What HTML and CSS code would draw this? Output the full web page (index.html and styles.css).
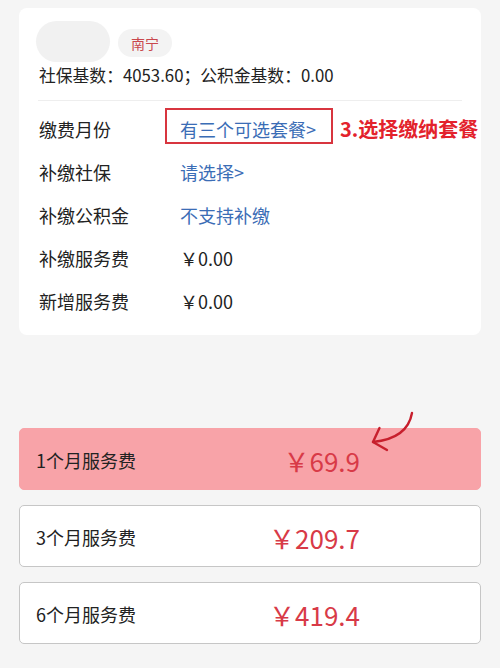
FILE: index.html
```html
<!DOCTYPE html>
<html lang="zh-CN">
<head>
<meta charset="utf-8">
<link rel="stylesheet" href="styles.css">
</head>
<body>
<div class="page">
  <div class="card">
    <div class="head">
      <div class="avatar"></div>
      <span class="tag">南宁</span>
    </div>
    <div class="base">社保基数：4053.60；公积金基数：0.00</div>
    <div class="divider"></div>
    <div class="rows">
      <div class="row">
        <span class="lbl">缴费月份</span>
        <span class="val hl">有三个可选套餐&gt;</span>
        <span class="note">3.选择缴纳套餐</span>
      </div>
      <div class="row">
        <span class="lbl">补缴社保</span>
        <span class="val">请选择&gt;</span>
      </div>
      <div class="row">
        <span class="lbl">补缴公积金</span>
        <span class="val">不支持补缴</span>
      </div>
      <div class="row">
        <span class="lbl">补缴服务费</span>
        <span class="amt">￥0.00</span>
      </div>
      <div class="row">
        <span class="lbl">新增服务费</span>
        <span class="amt">￥0.00</span>
      </div>
    </div>
  </div>

  <div class="plans">
    <div class="plan active">
      <span class="plan-name">1个月服务费</span>
      <span class="price">￥69.9</span>
    </div>
    <div class="plan">
      <span class="plan-name">3个月服务费</span>
      <span class="price">￥209.7</span>
    </div>
    <div class="plan">
      <span class="plan-name">6个月服务费</span>
      <span class="price">￥419.4</span>
    </div>
    <svg class="arrow" width="50" height="50" viewBox="0 0 50 50">
      <path d="M43 5 Q38.5 30.5 4 34" fill="none" stroke="#c71f2d" stroke-width="2.4" stroke-linecap="round"/>
      <path d="M10.5 20 L4 34 L18 42" fill="none" stroke="#c71f2d" stroke-width="2.4" stroke-linecap="round" stroke-linejoin="round"/>
    </svg>
  </div>
</div>
</body>
</html>
```

FILE: styles.css
```css
html, body {
  margin: 0;
  padding: 0;
  background: #f5f5f5;
}
body {
  font-family: "Noto Sans CJK SC", "Noto Sans", sans-serif;
  color: #222;
}
.page {
  width: 500px;
  height: 668px;
  padding-top: 8px;
  box-sizing: border-box;
}
.card {
  margin: 0 19px;
  background: #fff;
  border-radius: 8px;
  padding: 13px 19px 13px 20px;
}
.head {
  display: flex;
  align-items: center;
  gap: 8px;
  margin-left: -3px;
}
.avatar {
  width: 74px;
  height: 41px;
  border-radius: 21px;
  background: #f1f1f1;
}
.tag {
  height: 28px;
  line-height: 28px;
  padding: 0 13px;
  border-radius: 14px;
  background: #f3f3f3;
  color: #c9474d;
  font-size: 14px;
  margin-top: 3px;
}
.base {
  margin-top: 1px;
  font-size: 16.8px;
  line-height: 24px;
  color: #222;
  white-space: nowrap;
}
.divider {
  margin-top: 13px;
  margin-left: -1px;
  height: 1px;
  background: #eeeeee;
}
.rows {
  margin-top: 6px;
}
.row {
  display: flex;
  align-items: center;
  height: 43px;
  font-size: 18px;
  white-space: nowrap;
}
.lbl {
  width: 141px;
  flex: none;
  color: #222;
}
.val {
  color: #3b6db6;
  flex: none;
}
.amt {
  color: #222;
}
.hl {
  position: relative;
  display: inline-block;
  line-height: 24px;
}
.hl::before {
  content: "";
  position: absolute;
  left: -15px;
  right: -17px;
  top: -9px;
  bottom: -3px;
  border: 2px solid #d8353f;
}
.note {
  flex: none;
  margin-left: 24px;
  font-size: 20px;
  font-weight: bold;
  color: #e3222c;
}
.plans {
  position: relative;
  margin: 93px 19px 0;
  display: flex;
  flex-direction: column;
  gap: 15px;
}
.plan {
  height: 62px;
  box-sizing: border-box;
  display: flex;
  align-items: center;
  padding: 0 120px 0 16px;
  border: 1.5px solid #c6c6c6;
  border-radius: 5px;
  background: #fff;
}
.plan.active {
  background: #f8a3a8;
  border-color: #f8a3a8;
}
.plan-name {
  flex: 1;
  font-size: 18px;
  color: #222;
  padding-top: 2px;
}
.price {
  font-size: 26px;
  color: #d83a47;
  padding-top: 2px;
}
.arrow {
  position: absolute;
  left: 350px;
  top: -20px;
}
```
